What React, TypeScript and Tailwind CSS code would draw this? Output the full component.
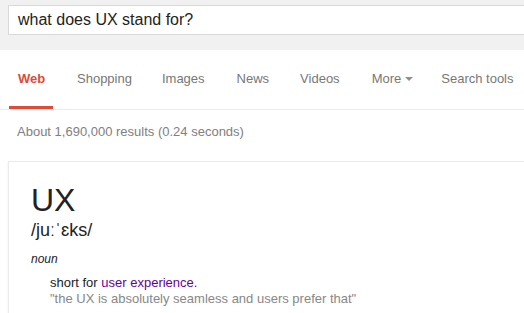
import React from 'react';

const tabs = [
  { label: 'Shopping', x: 'ml-[24px]' },
  { label: 'Images', x: 'ml-[30px]' },
  { label: 'News', x: 'ml-[32px]' },
  { label: 'Videos', x: 'ml-[31px]' },
];

const App = () => {
  return (
    <div className="w-[524px] h-[313px] overflow-hidden bg-white font-['Liberation_Sans',Arial,sans-serif]">
      {/* search bar */}
      <div className="bg-[#f1f1f1] h-[50px] pt-[5px] pl-[8px]">
        <div className="h-[30px] w-[540px] bg-white border border-[#d9d9d9] flex items-center pl-[9px] text-[16px] text-[#222]">
          what does UX stand for?
        </div>
      </div>

      {/* tabs */}
      <div className="h-[60px] border-b border-[#ebebeb] flex items-start text-[13px] text-[#777] pt-[20px]">
        <div className="ml-[9px] w-[44px] h-[39px] flex flex-col items-center justify-between">
          <span className="font-bold text-[#dd4b39] pl-[1px] leading-[18px]">Web</span>
          <div className="w-full h-[3px] bg-[#dd4b39]" />
        </div>
        {tabs.map((t) => (
          <span key={t.label} className={`${t.x} leading-[18px]`}>
            {t.label}
          </span>
        ))}
        <span className="ml-[32px] leading-[18px] flex items-center">
          More
          <span className="ml-[4px] w-0 h-0 border-l-[4px] border-r-[4px] border-t-[4px] border-l-transparent border-r-transparent border-t-[#909090]" />
        </span>
        <span className="ml-[28px] leading-[18px] whitespace-nowrap">Search tools</span>
      </div>

      <div className="pl-[17px] pt-[14px] text-[13px] text-[#808080] leading-[16px]">
        About 1,690,000 results (0.24 seconds)
      </div>

      {/* card */}
      <div className="ml-[8px] mt-[21px] w-[540px] h-[200px] border border-[#ebebeb] shadow-[0_1px_2px_rgba(0,0,0,0.08)] pl-[22px] pt-[19px] text-[#222]">
        <div className="text-[32px] leading-[38px]">UX</div>
        <div className="text-[18px] leading-[22px]">/juːˈɛks/</div>
        <div className="mt-[11px] text-[12px] italic text-[#222] leading-[14px]">noun</div>
        <div className="mt-[9px] pl-[19px] text-[13px] leading-[16px]">
          <div>
            short for <span className="text-[#660099]">user experience.</span>
          </div>
          <div className="text-[#878787]">"the UX is absolutely seamless and users prefer that"</div>
        </div>
      </div>
    </div>
  );
};

export default App;
